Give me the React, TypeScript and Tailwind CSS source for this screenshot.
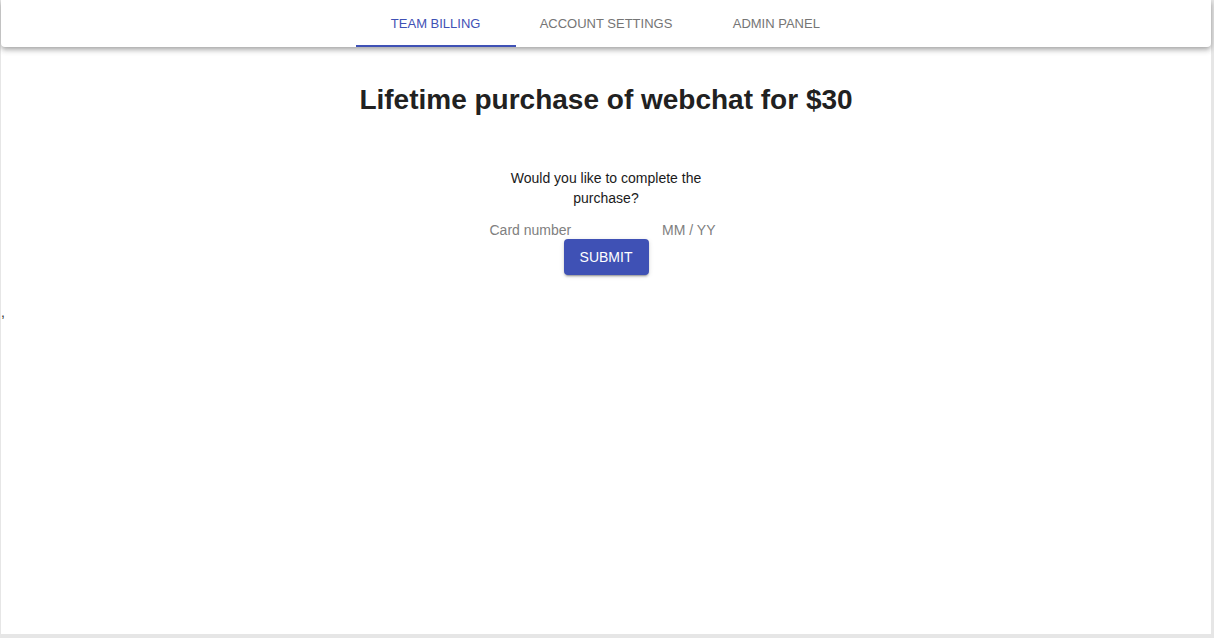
import { useState } from 'react'

const tabs = ['TEAM BILLING', 'ACCOUNT SETTINGS', 'ADMIN PANEL']

export default function App() {
  const [active, setActive] = useState(0)

  return (
    <div className="h-[638px] w-full bg-[#e6e6e6] pl-px pr-[3px] pb-[4px] font-['Liberation_Sans',Arial,sans-serif]">
      <div className="h-full bg-white flex flex-col">
        {/* 상단 탭 바 */}
        <div className="h-[47px] bg-white rounded-b-[4px] shadow-[0_2px_4px_-1px_rgba(0,0,0,0.2),0_4px_5px_0_rgba(0,0,0,0.14),0_1px_10px_0_rgba(0,0,0,0.12)] flex justify-center">
          {tabs.map((t, i) => (
            <button
              key={t}
              onClick={() => setActive(i)}
              className={`relative min-w-[160px] px-6 h-full text-[13px] ${
                i === active ? 'text-[#3f51b5]' : 'text-[#757575]'
              }`}
            >
              <span>{t}</span>
              {i === active && (
                <span className="absolute left-0 right-0 bottom-0 h-[2px] bg-[#3f51b5]" />
              )}
            </button>
          ))}
        </div>

        {/* 결제 영역 */}
        <h2 className="mt-[37px] text-center text-[28px] leading-[32px] font-bold text-[#212121]">
          Lifetime purchase of webchat for $30
        </h2>

        <div className="mt-[52px] flex flex-col items-center">
          <p className="w-[210px] text-center text-[14px] leading-[20px] text-[#1a1a1a]">
            Would you like to complete the purchase?
          </p>
          <div className="mt-[14px] mr-[7px] w-[226px] flex justify-between text-[14px] leading-[16px] text-[#808080]">
            <span>Card number</span>
            <span>MM / YY</span>
          </div>
          <button className="mt-[1px] w-[85px] h-[36px] rounded-[4px] bg-[#3f51b5] text-white text-[14px] font-medium shadow-[0_3px_1px_-2px_rgba(0,0,0,0.2),0_2px_2px_0_rgba(0,0,0,0.14),0_1px_5px_0_rgba(0,0,0,0.12)]">
            SUBMIT
          </button>
        </div>

        <div className="mt-[29px] text-[14px] leading-[16px] text-[#333]">,</div>
      </div>
    </div>
  )
}
